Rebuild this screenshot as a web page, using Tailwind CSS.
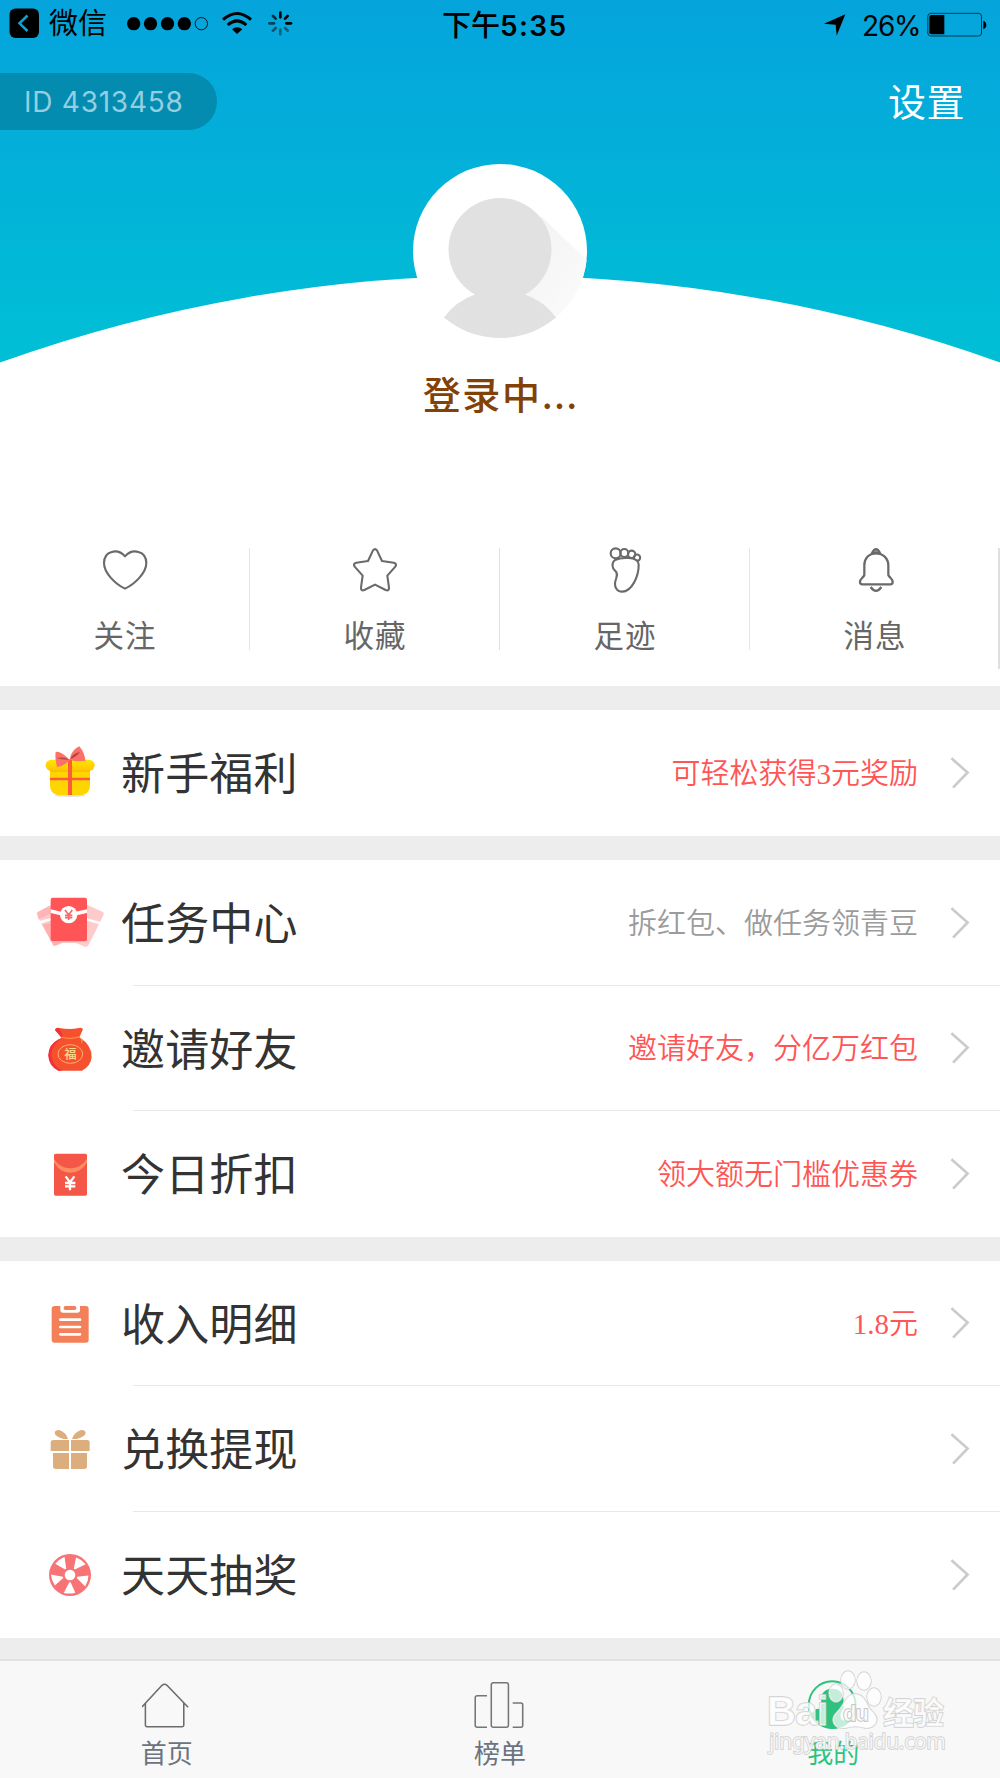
<!DOCTYPE html>
<html lang="zh-CN">
<head>
<meta charset="utf-8">
<title>我的</title>
<script src="https://cdn.jsdelivr.net/npm/@tailwindcss/browser@4"></script>
</head>
<body class="w-[1000px] h-[1778px] overflow-hidden bg-white font-['Inter','Noto_Sans_CJK_SC',sans-serif] text-[#333]">
<div class="flex flex-col h-[1778px]">

  <!-- profile header -->
  <header class="relative h-[536px] shrink-0">
    <svg class="absolute inset-0" width="1000" height="536" viewBox="0 0 1000 536">
      <defs>
        <linearGradient id="sky" x1="0" y1="0" x2="0" y2="1"><stop offset="0" stop-color="#05a4dc"/><stop offset="1" stop-color="#00c0d5"/></linearGradient>
        <linearGradient id="shade" x1="0" y1="0" x2="1" y2="1"><stop offset="0" stop-color="#f2f2f2"/><stop offset="1" stop-color="#fdfdfd"/></linearGradient>
        <clipPath id="disc"><circle cx="500" cy="251" r="87"/></clipPath>
      </defs>
      <rect width="1000" height="366" fill="url(#sky)"/>
      <path d="M0 362.5A1480 1480 0 0 1 1000 362.5V536H0Z" fill="#fff"/>
      <circle cx="500" cy="251" r="87" fill="#fff"/>
      <g clip-path="url(#disc)">
        <path d="M541 216L600 273V340H570L520 290Z" fill="url(#shade)"/>
        <circle cx="500" cy="249.500" r="51.500" fill="#e1e1e1"/>
        <path d="M444 317.500Q456 301 475 294.500L480 290H520L525 294.500Q544 301 556 317.500V345H444Z" fill="#e1e1e1"/>
      </g>
    </svg>

    <div class="relative flex h-[46px] items-center text-black">
      <svg class="ml-[9px]" width="31" height="30" viewBox="0 -.5 31 30"><rect x=".5" y="0" width="29.500" height="29.500" rx="6"/><path d="M18.500 7L10.500 14.800L18.500 22.500" fill="none" stroke="#06a6da" stroke-width="2.500"/></svg>
      <span class="ml-[9px] mt-[1px] text-[29px] leading-none">微信</span>
      <svg class="ml-[17px]" width="172" height="28" viewBox="372 29 516 84">
        <circle cx="401" cy="73" r="20"/><circle cx="451.500" cy="73" r="20"/><circle cx="502.500" cy="73" r="20"/><circle cx="553" cy="73" r="20"/><circle cx="604" cy="73" r="18.500" fill="none" stroke="#000" stroke-width="2.500"/>
        <g fill="none" stroke="#000" stroke-width="9"><path d="M669 61Q711 24 753 61"/><path d="M683 77Q711 52 739 77"/></g><path d="M696 90Q711 77 727 90L711 104Z"/>
        <g stroke="#000" stroke-width="8" stroke-linecap="round"><path d="M841 40V54"/><path d="M863 50L855 58"/><path d="M873 72H859"/><path d="M863 94L855 86" opacity=".4"/><path d="M841 105V91" opacity=".4"/><path d="M819 94L827 86" opacity=".5"/><path d="M808 72H822" opacity=".6"/><path d="M819 50L827 58" opacity=".7"/></g>
      </svg>
      <div class="absolute left-[442px] top-[11px] flex items-center leading-[30px] font-medium"><span class="text-[29px]">下午</span><span class="text-[28px] font-semibold tracking-[1.4px]">5:35</span></div>
      <div class="absolute left-[820px] top-[10px] flex h-[30px] items-center">
        <svg width="30" height="30" viewBox="960 30 90 90"><path d="M1036 43L1010 107L1007 74L972 71Z"/></svg>
        <span class="ml-[12px] mt-[1px] w-[58px] whitespace-nowrap text-[28px] leading-none tracking-[-1.2px]">26%</span>
        <svg class="ml-[6px]" width="62" height="26" viewBox="1278 36 186 78"><rect x="1283.500" y="40" width="161" height="68" rx="9" fill="none" stroke="#000" stroke-opacity=".65" stroke-width="3"/><path d="M1294 45H1333V103H1294Q1288 103 1288 97V51Q1288 45 1294 45Z"/><path d="M1450 62Q1459 66 1459 75T1450 88Z"/></svg>
      </div>
    </div>

    <div class="relative mt-[27px] flex items-center justify-between">
      <div class="flex h-[57px] w-[217px] items-center rounded-r-full bg-[#038bb0] pl-[24px] text-[28px] tracking-[0.750px] text-[#93cfe1]">ID 4313458</div>
      <span class="mr-[35px] pt-[1px] text-[38px] leading-[56px] tracking-[0.5px] text-white">设置</span>
    </div>
    <div class="absolute left-0 right-0 top-[366px] pl-[1px] text-center text-[38px] font-medium leading-[58px] tracking-[1.6px] text-[#824107]">登录中<span class="tracking-[0.700px]">...</span></div>
  </header>

  <!-- shortcuts -->
  <nav class="grid h-[150px] shrink-0 grid-cols-4 text-[30.500px] tracking-[1px] text-[#666]">
    <a class="relative flex flex-col items-center pt-[9px]">
      <svg width="50" height="50" viewBox="300 45 150 150" fill="none" stroke="#6a6a6a" stroke-width="6.300" stroke-linejoin="round"><path d="M375 79C353 54 312 62 312 99C312 129 346 162 375 176C404 162 439 129 439 99C439 62 397 54 375 79Z"/></svg>
      <span class="mt-[18px] leading-[46px]">关注</span><i class="absolute right-0 top-[12px] h-[102px] w-px bg-[#e6e6e6]"></i>
    </a>
    <a class="relative flex flex-col items-center pt-[9px]">
      <svg width="50" height="50" viewBox="1050 45 150 150" fill="none" stroke="#6a6a6a" stroke-width="6.300" stroke-linejoin="round"><path d="M1119 61Q1125 54 1131 61L1146 93L1181 98Q1192 101 1186 110L1162 137L1167 173Q1167 184 1157 180L1125 164L1093 180Q1083 184 1083 173L1088 137L1064 110Q1058 101 1069 98L1104 93Z"/></svg>
      <span class="mt-[18px] leading-[46px]">收藏</span><i class="absolute right-0 top-[12px] h-[102px] w-px bg-[#dfdfdf]"></i>
    </a>
    <a class="relative flex flex-col items-center pt-[9px]">
      <svg width="50" height="50" viewBox="300 45 150 150" fill="none" stroke="#6a6a6a" stroke-width="6.300"><circle cx="347" cy="70" r="15"/><circle cx="373" cy="69" r="12"/><circle cx="395" cy="73" r="11"/><circle cx="411" cy="83" r="9.500"/><path d="M345 90C334 98 336 115 345 122C354 129 351 137 348 147C340 170 350 185 367 185C394 185 417 140 416 103C415 78 362 82 345 90Z" fill="#fff"/></svg>
      <span class="mt-[18px] leading-[46px]">足迹</span><i class="absolute right-0 top-[12px] h-[102px] w-px bg-[#e6e6e6]"></i>
    </a>
    <a class="relative flex flex-col items-center pt-[9px]">
      <svg width="50" height="50" viewBox="1050 45 150 150" fill="none" stroke="#6a6a6a" stroke-width="6.800" stroke-linejoin="round"><path d="M1128 70C1106 70 1093 86 1093 106V135C1090 143 1080 146 1080 156Q1080 163 1087 163H1171Q1178 163 1178 156C1178 146 1168 143 1165 135V106C1165 86 1150 70 1128 70Z"/><path d="M1116 69Q1128 46 1140 69Z" fill="#999"/><path d="M1112 171Q1128 194 1144 171"/></svg>
      <span class="mt-[18px] leading-[46px]">消息</span><i class="absolute right-0 top-[12px] h-[121px] w-[2px] bg-[#dfdfdf]"></i>
    </a>
  </nav>

  <main class="h-[973px] shrink-0 bg-[#ededed] pt-[24px]">
    <section class="bg-white">
      <div class="flex h-[126px] items-center pl-[34px] pr-[28px]">
        <svg width="72" height="60" viewBox="102 99 216 180">
          <defs><linearGradient id="gold" x1="0" y1="0" x2="0" y2="1"><stop offset="0" stop-color="#ffe500"/><stop offset="1" stop-color="#ffc400"/></linearGradient></defs>
          <ellipse cx="210" cy="256" rx="46" ry="5" fill="#000" opacity=".12"/>
          <path d="M150 172H270V224Q270 255 238 255H182Q150 255 150 224Z" fill="#ffd500"/>
          <rect x="137" y="149" width="147" height="34" rx="17" fill="url(#gold)"/>
          <path d="M150 181H270V186H150Z" fill="#f6b900" opacity=".7"/>
          <path d="M150 207H270" stroke="#ff5a3c" stroke-width="7" fill="none"/><path d="M204 148H216V255H204Z" fill="#ff5a3c"/>
          <path d="M209 149Q180 121 167 126Q164 150 172 171Q194 168 209 149Z" fill="#fa7268"/><path d="M209 149Q214 119 238 109Q254 128 256 152Q231 157 209 149Z" fill="#fa7268"/>
          <path d="M208 149Q190 139 170 144Q188 150 208 149ZM211 147Q217 131 240 125Q230 140 211 147Z" fill="#b8433d"/>
        </svg>
        <h2 class="ml-[15px] flex-1 pt-[2px] text-[44px] leading-none tracking-[0.150px]">新手福利</h2>
        <span class="mr-[30px] pt-[3px] font-['Liberation_Serif','Noto_Sans_CJK_SC',serif] text-[29px] font-[350] text-[#ff5555]">可轻松获得3元奖励</span>
        <svg width="24" height="37" viewBox="1044 134 72 112" fill="none" stroke="#cbcbcb" stroke-width="8"><path d="M1054 144L1103 187L1059 233"/></svg>
      </div>
    </section>

    <section class="mt-[24px] bg-white">
      <div class="relative flex h-[126px] items-center pl-[34px] pr-[28px]">
        <svg width="72" height="60" viewBox="102 549 216 180">
          <path d="M152 586L110 608Q109 612 112 618L160 707Q164 711 186 699L228 699L257 711Q263 709 266 704L311 614Q312 609 309 606L261 584Z" fill="#ffcaca"/><path d="M152 638L127 644L160 705Q164 710 188 696H152Z" fill="#ffb0b0"/>
          <path d="M152 586L112 607L115 613V628L152 611Z" fill="#ffb5b5"/><path d="M115 634L153 624V631L122 641ZM261 625L305 637L302 644L261 632Z" fill="#fff"/>
          <rect x="152" y="563" width="109" height="131" rx="6" fill="#ff5557"/>
          <path d="M152 598L183 605H227L261 598V609L230 616H181L152 609Z" fill="#fff"/><circle cx="206" cy="614" r="26" fill="#fff"/>
          <path d="M195 600L206 614L217 600M206 614V630M195 616H217M195 623H217" stroke="#ff6567" stroke-width="5" fill="none"/>
        </svg>
        <h2 class="ml-[15px] flex-1 pt-[2px] text-[44px] leading-none tracking-[0.150px]">任务中心</h2>
        <span class="mr-[30px] pt-[3px] font-['Liberation_Serif','Noto_Sans_CJK_SC',serif] text-[29px] font-[350] text-[#9b9b9b]">拆红包、做任务领青豆</span>
        <svg width="24" height="37" viewBox="1044 134 72 112" fill="none" stroke="#cbcbcb" stroke-width="8"><path d="M1054 144L1103 187L1059 233"/></svg>
        <i class="absolute bottom-0 left-[133px] right-0 h-px bg-[#e8e8e8]"></i>
      </div>
      <div class="relative flex h-[125px] items-center pl-[34px] pr-[28px]">
        <svg width="72" height="60" viewBox="102 145 216 180">
          <path d="M184 201L165 178Q166 170 178 172Q210 178 236 172Q247 170 249 176L238 200Q276 224 275 260Q272 287 246 300H175Q146 287 145 254Q149 220 184 201Z" fill="#f5512f"/>
          <path d="M184 199L165 178Q168 170 179 174L190 198ZM176 206Q145 221 145 254Q147 286 175 300H187Q156 284 154 254Q155 224 182 205Z" fill="#f5303a"/>
          <path d="M184 199Q210 208 238 198M238 199L249 210M246 205L245 218" fill="none" stroke="#ff9652" stroke-width="3"/>
          <ellipse cx="211" cy="250" rx="37" ry="28" fill="none" stroke="#ffb06d" stroke-width="3"/>
          <text x="211" y="264" font-size="37" font-weight="500" text-anchor="middle" fill="#ffd88c" font-family="Noto Sans CJK SC">福</text>
        </svg>
        <h2 class="ml-[15px] flex-1 pt-[2px] text-[44px] leading-none tracking-[0.150px]">邀请好友</h2>
        <span class="mr-[30px] pt-[3px] font-['Liberation_Serif','Noto_Sans_CJK_SC',serif] text-[29px] font-[350] text-[#ff5555]">邀请好友，分亿万红包</span>
        <svg width="24" height="37" viewBox="1044 134 72 112" fill="none" stroke="#cbcbcb" stroke-width="8"><path d="M1054 144L1103 187L1059 233"/></svg>
        <i class="absolute bottom-0 left-[133px] right-0 h-px bg-[#e8e8e8]"></i>
      </div>
      <div class="flex h-[126px] items-center pl-[34px] pr-[28px]">
        <svg width="72" height="60" viewBox="102 523 216 180">
          <rect x="162" y="552" width="99" height="126" rx="5" fill="#f45648"/>
          <path d="M162 568Q180 596 211 596T261 568V578Q244 609 211 609T162 578Z" fill="#ff8c60"/>
          <path d="M197 620L210 638L223 620M210 638V662M195 640H226M195 650H226" stroke="#fff" stroke-width="7" fill="none"/>
        </svg>
        <h2 class="ml-[15px] flex-1 pt-[2px] text-[44px] leading-none tracking-[0.150px]">今日折扣</h2>
        <span class="mr-[30px] pt-[3px] font-['Liberation_Serif','Noto_Sans_CJK_SC',serif] text-[29px] font-[350] text-[#ff5555]">领大额无门槛优惠券</span>
        <svg width="24" height="37" viewBox="1044 134 72 112" fill="none" stroke="#cbcbcb" stroke-width="8"><path d="M1054 144L1103 187L1059 233"/></svg>
      </div>
    </section>

    <section class="mt-[24px] bg-white">
      <div class="relative flex h-[125px] items-center pl-[34px] pr-[28px]">
        <svg width="72" height="60" viewBox="102 100 216 180">
          <rect x="155" y="136" width="111" height="110" rx="9" fill="#f38058"/><path d="M181 134H240V148Q240 156 232 156H189Q181 156 181 148Z" fill="#fff"/><rect x="191" y="136" width="38" height="12" rx="5" fill="#f38058"/>
          <path d="M181 177H240M181 199H240M181 221H240" stroke="#fff" stroke-width="8" stroke-linecap="round"/>
        </svg>
        <h2 class="ml-[15px] flex-1 pt-[2px] text-[44px] leading-none tracking-[0.150px]">收入明细</h2>
        <span class="mr-[30px] pt-[3px] font-['Liberation_Serif','Noto_Sans_CJK_SC',serif] text-[29px] font-[350] text-[#ff5555]">1.8元</span>
        <svg width="24" height="37" viewBox="1044 134 72 112" fill="none" stroke="#cbcbcb" stroke-width="8"><path d="M1054 144L1103 187L1059 233"/></svg>
        <i class="absolute bottom-0 left-[133px] right-0 h-px bg-[#e8e8e8]"></i>
      </div>
      <div class="relative flex h-[126px] items-center pl-[34px] pr-[28px]">
        <svg width="72" height="60" viewBox="102 477 216 180" fill="#dcae7e">
          <path d="M160 540H207V573H152V548Q152 540 160 540ZM213 540H261Q269 540 269 548V573H213ZM159 579H207V627H167Q159 627 159 619ZM213 579H261V619Q261 627 253 627H213Z"/>
          <path d="M204 537H191Q165 530 164 518Q166 509 178 510Q199 518 204 537ZM216 537H230Q256 530 257 518Q255 509 243 510Q222 518 216 537Z"/>
        </svg>
        <h2 class="ml-[15px] flex-1 pt-[2px] text-[44px] leading-none tracking-[0.150px]">兑换提现</h2>
        <svg width="24" height="37" viewBox="1044 134 72 112" fill="none" stroke="#cbcbcb" stroke-width="8"><path d="M1054 144L1103 187L1059 233"/></svg>
        <i class="absolute bottom-0 left-[133px] right-0 h-px bg-[#e8e8e8]"></i>
      </div>
      <div class="flex h-[126px] items-center pl-[34px] pr-[28px]">
        <svg width="72" height="60" viewBox="102 855 216 180">
          <defs><path id="slot" d="M208 967H212L226 998Q210 1003 191 999Z"/></defs>
          <circle cx="210" cy="945" r="63" fill="#f77376"/>
          <g fill="#fff"><circle cx="210" cy="945" r="16"/><use href="#slot"/><use href="#slot" transform="rotate(72 210 945)"/><use href="#slot" transform="rotate(144 210 945)"/><use href="#slot" transform="rotate(216 210 945)"/><use href="#slot" transform="rotate(288 210 945)"/></g>
        </svg>
        <h2 class="ml-[15px] flex-1 pt-[2px] text-[44px] leading-none tracking-[0.150px]">天天抽奖</h2>
        <svg width="24" height="37" viewBox="1044 134 72 112" fill="none" stroke="#cbcbcb" stroke-width="8"><path d="M1054 144L1103 187L1059 233"/></svg>
      </div>
    </section>
  </main>

  <!-- tab bar -->
  <footer class="relative grid h-[119px] shrink-0 grid-cols-3 border-t-2 border-[#e2e2e2] bg-[#f8f8f8] text-[26px] leading-[36px] text-[#6b7280]">
    <a class="flex flex-col items-center pt-[19px]">
      <svg width="50" height="50" viewBox="398 180 140 150" preserveAspectRatio="none" fill="none" stroke="#6b6b6b" stroke-width="4.300"><path d="M397 262L454 196Q461 190 468 196L527 262M407.500 250V316Q408 320 412 320H511Q515 320 515 316V250"/></svg>
      <span class="mt-[6px]">首页</span>
    </a>
    <a class="flex flex-col items-center pt-[19px]">
      <svg width="56" height="50" viewBox="1321 180 156.800 150" preserveAspectRatio="none" fill="none" stroke="#757575" stroke-width="4.300"><rect x="1375" y="188" width="48" height="134" rx="6"/><path d="M1363 227H1336Q1330 227 1330 233V316Q1330 322 1336 322H1363M1435 249H1458Q1463 249 1463 255V316Q1463 322 1458 322H1435"/></svg>
      <span class="mt-[6px]">榜单</span>
    </a>
    <a class="flex flex-col items-center pt-[19px] text-[#2ec27e]">
      <svg width="56" height="50" viewBox="313.500 180 168 150"><circle cx="395" cy="254" r="70" fill="none" stroke="#2ec27e" stroke-width="6"/><path d="M362 241Q362 206 395 206T429 241V263Q413 283 424 300Q443 307 455 285L462 282Q445 326 395 326Q350 322 330 282L347 267L357 266L362 282Z" fill="#2ec27e"/></svg>
      <span class="mt-[6px]">我的</span>
    </a>
    <svg class="absolute left-[760px] top-[4px]" width="200" height="110" viewBox="760 1665 200 110" fill="#fff" fill-opacity=".72" stroke="#cfcfcf" stroke-width="1.400" paint-order="stroke">
      <g font-family="Liberation Sans" font-weight="700">
        <text x="767" y="1725" font-size="40" textLength="61">Bai</text>
        <ellipse cx="848" cy="1680" rx="7" ry="9"/><ellipse cx="864" cy="1681" rx="7" ry="9"/><ellipse cx="836" cy="1693" rx="7" ry="9"/><ellipse cx="874" cy="1697" rx="7" ry="9"/>
        <path d="M855 1694C866 1694 866 1706 873 1712C881 1720 875 1729 865 1728Q855 1725 846 1728C834 1730 829 1720 837 1712C845 1705 845 1694 855 1694Z"/>
        <text x="843" y="1721" font-size="22" textLength="26" stroke="#bdbdbd">du</text>
        <text x="883" y="1724" font-size="31" textLength="61" font-family="Noto Sans CJK SC">经验</text>
      </g>
      <text x="769" y="1749" font-size="21" textLength="177" font-family="Noto Sans">jingyan.baidu.com</text>
    </svg>
  </footer>
</div>
</body>
</html>
